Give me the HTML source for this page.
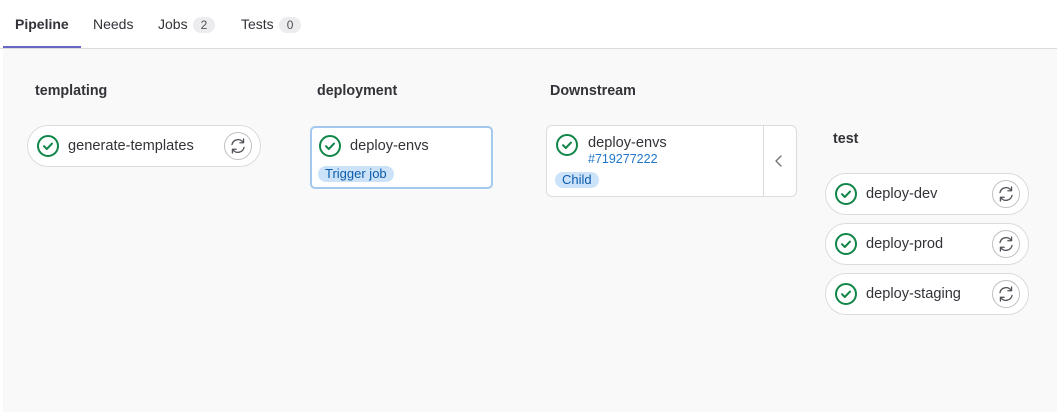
<!DOCTYPE html>
<html><head><style>
body{margin:0;width:1057px;height:412px;background:#fff;font-family:"Liberation Sans",sans-serif;color:#333238;position:relative;overflow:hidden}
.a{position:absolute}
.tab{position:absolute;top:16px;font-size:14px;color:#333238}
.badge{display:inline-block;background:#ececef;border-radius:9px;font-size:12px;padding:1px 8px;color:#535158;margin-left:5px}
.gray{position:absolute;left:3px;top:49px;right:0;bottom:0;background:#f9f9fa}
.h{position:absolute;font-size:14.3px;font-weight:bold;color:#333238}
.pill{position:absolute;background:#fff;border:1px solid #dcdcde;border-radius:22px;height:40px;box-sizing:border-box}
.ok{position:absolute;width:22px;height:22px}
.name{position:absolute;font-size:14.6px;color:#333238}
.rb{position:absolute;width:28px;height:28px;border:1px solid #bfbfc3;border-radius:50%;box-sizing:border-box;background:#fff}
.lbl{position:absolute;background:#cbe2f9;color:#0b5cad;font-size:13px;border-radius:9px;padding:0 7px;line-height:16px}
</style></head><body>
<div class="tab" style="left:15px;font-weight:bold">Pipeline</div>
<div class="tab" style="left:93px">Needs</div>
<div class="tab" style="left:158px">Jobs<span class="badge">2</span></div>
<div class="tab" style="left:241px">Tests<span class="badge">0</span></div>
<div class="a" style="left:3px;top:46px;width:78px;height:2px;background:#6666c4"></div>
<div class="a" style="left:0;top:48px;width:1057px;height:1px;background:#dcdcde"></div>
<div class="gray"></div>

<svg width="0" height="0" style="position:absolute"><defs>
<symbol id="ok" viewBox="0 0 22 22"><circle cx="11" cy="11" r="10" fill="#fff" stroke="#108548" stroke-width="2"/><path d="M7 11.2l2.8 2.8 5.2-5.4" fill="none" stroke="#108548" stroke-width="2" stroke-linecap="round" stroke-linejoin="round"/></symbol>
<symbol id="rt" viewBox="0 0 28 28"><path d="M7.5 12.5a6.7 6.7 0 0 1 12-2.5M20.5 15.5a6.7 6.7 0 0 1-12 2.5" fill="none" stroke="#535158" stroke-width="1.4" stroke-linecap="round"/><path d="M20 6.5v4h-4M8 21.5v-4h4" fill="none" stroke="#535158" stroke-width="1.4" stroke-linecap="round" stroke-linejoin="round"/></symbol>
</defs></svg>

<div class="h" style="left:35px;top:83px">templating</div>
<div class="h" style="left:317px;top:83px">deployment</div>
<div class="h" style="left:550px;top:83px">Downstream</div>
<div class="h" style="left:833px;top:131px">test</div>

<div class="pill" style="left:27px;top:125px;width:234px;height:42px"></div>
<svg class="ok" style="left:37px;top:135px"><use href="#ok"/></svg>
<div class="name" style="left:68px;top:138px">generate-templates</div>
<svg class="rb" style="left:224px;top:132px" viewBox="0 0 28 28"><use href="#rt"/></svg>

<div class="a" style="left:310px;top:126px;width:183px;height:63px;box-sizing:border-box;border:2px solid #a5c8ee;border-radius:5px;background:#fff"></div>
<svg class="ok" style="left:319px;top:135px"><use href="#ok"/></svg>
<div class="name" style="left:350px;top:138px">deploy-envs</div>
<div class="lbl" style="left:318px;top:166px">Trigger job</div>

<div class="a" style="left:546px;top:125px;width:251px;height:72px;box-sizing:border-box;border:1px solid #dcdcde;border-radius:6px;background:#fff"></div>
<div class="a" style="left:763px;top:126px;width:1px;height:70px;background:#dcdcde"></div>
<svg class="ok" style="left:556px;top:134px"><use href="#ok"/></svg>
<div class="name" style="left:588px;top:135px">deploy-envs</div>
<div class="a" style="left:588px;top:152px;font-size:12.5px;color:#1f75cb">#719277222</div>
<div class="lbl" style="left:555px;top:172px">Child</div>
<svg class="a" style="left:774px;top:154px" width="10" height="14"><path d="M7 2L2 7l5 5" fill="none" stroke="#737278" stroke-width="1.4" stroke-linecap="round" stroke-linejoin="round"/></svg>

<div class="pill" style="left:825px;top:173px;width:204px;height:42px"></div>
<svg class="ok" style="left:835px;top:183px"><use href="#ok"/></svg>
<div class="name" style="left:866px;top:186px">deploy-dev</div>
<svg class="rb" style="left:992px;top:180px" viewBox="0 0 28 28"><use href="#rt"/></svg>

<div class="pill" style="left:825px;top:223px;width:204px;height:42px"></div>
<svg class="ok" style="left:835px;top:233px"><use href="#ok"/></svg>
<div class="name" style="left:866px;top:236px">deploy-prod</div>
<svg class="rb" style="left:992px;top:230px" viewBox="0 0 28 28"><use href="#rt"/></svg>

<div class="pill" style="left:825px;top:273px;width:204px;height:42px"></div>
<svg class="ok" style="left:835px;top:283px"><use href="#ok"/></svg>
<div class="name" style="left:866px;top:286px">deploy-staging</div>
<svg class="rb" style="left:992px;top:280px" viewBox="0 0 28 28"><use href="#rt"/></svg>
</body></html>
